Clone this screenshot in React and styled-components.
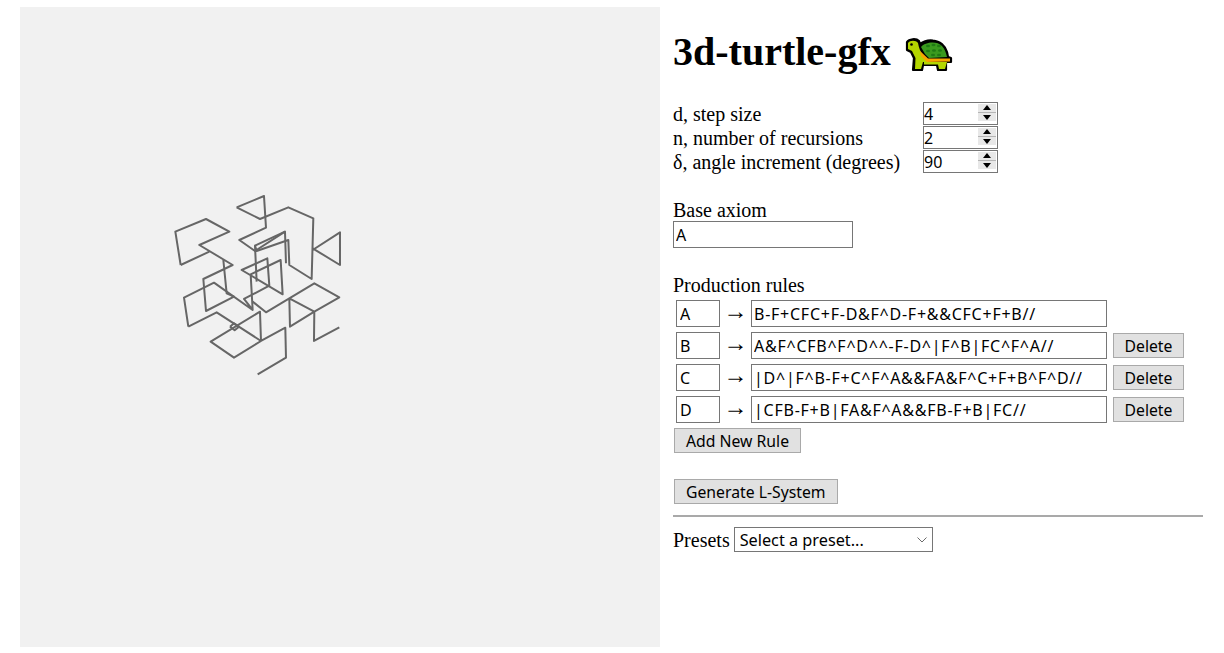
import React from 'react';
import styled, { createGlobalStyle } from 'styled-components';

const GlobalStyle = createGlobalStyle`
    html, body {
        margin: 0;
        padding: 0;
        background: #FFFFFF;
    }
`;

const drawing = [
    '293,568 378,518 376,428 303,468 300,380 152,470 222,518 303,468',
    '85,425 72,338 162,293 278,375 252,342 328,302 322,220 245,255 368,328 362,225 272,268 278,375',
    '85,425 170,382 303,468',
    '210,425 222,415 237,425 224,436 210,425',
    '278,350 318,382 388,340 463,295 538,337 463,380 388,340 390,425 463,380 462,468 538,427',
    '230,67 312,33 318,128 238,165 285,198 375,140 378,235',
    '230,67 300,102 385,67 460,100 455,282 388,240 385,165 290,198 285,182 290,290',
    '285,182 375,140',
    '458,195 540,142 540,240 458,190',
    '62,240 46,140 138,102 208,140 118,180 218,240 130,282 138,378 222,335 200,325 190,225',
    '62,240 148,200',
];

const rules = [
    { key: 'A', value: 'B-F+CFC+F-D&F^D-F+&&CFC+F+B//' },
    { key: 'B', value: 'A&F^CFB^F^D^^-F-D^|F^B|FC^F^A//', removable: true },
    { key: 'C', value: '|D^|F^B-F+C^F^A&&FA&F^C+F+B^F^D//', removable: true },
    { key: 'D', value: '|CFB-F+B|FA&F^A&&FB-F+B|FC//', removable: true },
];

const params = [
    { label: 'd, step size', value: 4 },
    { label: 'n, number of recursions', value: 2 },
    { label: 'δ, angle increment (degrees)', value: 90 },
];

const Turtle = () => (
    <TurtleIcon viewBox="0 0 48 36" width="48" height="36">
        {/* outline */}
        <path d="M2 4 C4 1 11 0 14 3 L15 6 C19 3 24 2 28 2.5 C35 3 40 8 42 14 L43 19 L46 20 L46 24 L41 24 L41 32 L33 32 L32 27 L18 27 L17 32 L8 32 L9 20 L6 14 L2 12 Z" fill="#000000" stroke="#000000" strokeWidth="2.2" strokeLinejoin="round" />
        {/* head, neck and front leg */}
        <path d="M3 5 C5 2 11 2 13 5 C14 10 15 13 18 17 L23 24 L18 24 L16 31 L10 31 L10.5 20 L7 13 L3 11 Z" fill="#B4D600" />
        {/* back leg and belly */}
        <path d="M19 24 L42 24 L40 31 L34 31 L33 26.5 L19 26.5 Z" fill="#B4D600" />
        <path d="M16 9 C20 4 32 2.5 37 8 C40 11 41 15 42 19 L24 20 L20 16 Z" fill="#3A9A1E" />
        <path d="M15 13 L23 20.5 L45 20.5 L45 23.5 L22 24 L16 18 Z" fill="#F7A600" />
        <g fill="#1F7A14">
            <ellipse cx="23" cy="8" rx="2" ry="1.3" />
            <ellipse cx="28.5" cy="7" rx="2" ry="1.3" />
            <ellipse cx="34" cy="8" rx="2" ry="1.3" />
            <ellipse cx="23" cy="13" rx="2" ry="1.3" />
            <ellipse cx="29" cy="12.5" rx="2" ry="1.3" />
            <ellipse cx="35" cy="12.5" rx="2" ry="1.3" />
            <ellipse cx="28" cy="17" rx="2" ry="1.3" />
            <ellipse cx="34" cy="17" rx="2" ry="1.3" />
        </g>
        <circle cx="6.5" cy="6.5" r="1.3" fill="#000000" />
    </TurtleIcon>
);

const NumberField = ({ value }) => (
    <NumberWrap>
        <NumberInput type="text" defaultValue={value} />
        <Spinner>
            <SpinButton viewBox="0 0 18 8" width="18" height="8"><path d="M9 1 L13 6 L5 6 Z" fill="#000000" /></SpinButton>
            <SpinButton viewBox="0 0 18 8" width="18" height="8"><path d="M5 2 L13 2 L9 7 Z" fill="#000000" /></SpinButton>
        </Spinner>
    </NumberWrap>
);

const App = () => {
    return (
        <Page>
            <GlobalStyle />
            <Viewport>
                <svg width="640" height="640" viewBox="0 0 640 640">
                    <g transform="translate(140 178) scale(0.3333)" fill="none" stroke="#666666" strokeWidth="6" strokeLinejoin="round">
                        {drawing.map((points) => (
                            <polyline key={points} points={points} />
                        ))}
                    </g>
                </svg>
            </Viewport>
            <Controls>
                <Title>3d-turtle-gfx <Turtle /></Title>
                <ParamGrid>
                    {params.map((p) => (
                        <React.Fragment key={p.label}>
                            <Label>{p.label}</Label>
                            <NumberField value={p.value} />
                        </React.Fragment>
                    ))}
                </ParamGrid>
                <Section>
                    <Label>Base axiom</Label>
                    <AxiomInput defaultValue="A" />
                </Section>
                <RulesSection>
                    <Label>Production rules</Label>
                    <RuleList>
                        {rules.map((r) => (
                            <RuleRow key={r.key}>
                                <KeyInput defaultValue={r.key} />
                                <Arrow>→</Arrow>
                                <ValueInput defaultValue={r.value} />
                                {r.removable && <DeleteButton>Delete</DeleteButton>}
                            </RuleRow>
                        ))}
                    </RuleList>
                    <AddRow><Button>Add New Rule</Button></AddRow>
                </RulesSection>
                <GenerateRow><Button>Generate L-System</Button></GenerateRow>
                <Divider />
                <PresetRow>
                    <Label>Presets</Label>
                    <SelectWrap>
                        <PresetSelect>
                            <option>Select a preset...</option>
                        </PresetSelect>
                        <Chevron viewBox="0 0 10 6" width="10" height="6">
                            <path d="M0.5 0.5 L5 5 L9.5 0.5" fill="none" stroke="#6B6B6B" strokeWidth="1" />
                        </Chevron>
                    </SelectWrap>
                </PresetRow>
            </Controls>
        </Page>
    );
};

const uiFont = `'Noto Sans', 'Open Sans', sans-serif`;

const Page = styled.div`
    display: flex;
    gap: 13px;
    width: 1224px;
    height: 653px;
    padding: 7px 0 0 20px;
    box-sizing: border-box;
    overflow: hidden;
    font-family: 'Liberation Serif', serif;
    color: #000000;
`;

const Viewport = styled.div`
    flex: none;
    width: 640px;
    height: 640px;
    background: #F1F1F1;

    svg {
        display: block;
        filter: blur(0.45px);
    }
`;

const Controls = styled.div`
    flex: none;
    width: 530px;
`;

const Title = styled.h1`
    display: flex;
    align-items: center;
    gap: 4px;
    margin: 0;
    padding-top: 20px;
    height: 70px;
    box-sizing: border-box;
    font-size: 40px;
    line-height: 42px;
    font-weight: 700;
    white-space: pre;
`;

const TurtleIcon = styled.svg`
    flex: none;
    margin-top: 8px;
`;

const ParamGrid = styled.div`
    display: grid;
    grid-template-columns: 250px 75px;
    row-gap: 1px;
    margin-top: 25px;
`;

const Label = styled.span`
    display: block;
    height: 23px;
    padding-top: 2px;
    box-sizing: border-box;
    font-size: 20px;
    line-height: 21px;
    white-space: nowrap;
`;

const NumberWrap = styled.div`
    position: relative;
    width: 75px;
    height: 23px;
`;

const BaseInput = styled.input`
    display: block;
    box-sizing: border-box;
    border: 1px solid #767676;
    border-radius: 0;
    margin: 0;
    outline: none;
    background: #FFFFFF;
    color: #000000;
    font-family: ${uiFont};
    font-size: 16px;
`;

const NumberInput = styled(BaseInput)`
    width: 75px;
    height: 23px;
    padding: 0;
`;

const Spinner = styled.div`
    position: absolute;
    top: 2px;
    right: 2px;
    display: flex;
    flex-direction: column;
    gap: 1px;
    width: 18px;
    background: #B5B5B5;
`;

const SpinButton = styled.svg`
    display: block;
    background: #E8E8E8;
`;

const Section = styled.div`
    display: flex;
    flex-direction: column;
    margin-top: 25px;
`;

const AxiomInput = styled(BaseInput)`
    width: 180px;
    height: 27px;
    padding: 0 2px;
`;

const RulesSection = styled.div`
    margin-top: 25px;
`;

const RuleList = styled.div`
    display: flex;
    flex-direction: column;
    gap: 5px;
    margin-top: 4px;
    padding-left: 3px;
`;

const RuleRow = styled.div`
    display: flex;
    align-items: center;
    height: 27px;
`;

const KeyInput = styled(BaseInput)`
    flex: none;
    width: 44px;
    height: 27px;
    padding: 0 3px;
`;

const Arrow = styled.span`
    flex: none;
    width: 31px;
    padding-bottom: 5px;
    text-align: center;
    font-size: 24px;
    line-height: 22px;
`;

const ValueInput = styled(BaseInput)`
    flex: none;
    width: 356px;
    height: 27px;
    padding: 0 2px;
    letter-spacing: 0.75px;
`;

const Button = styled.button`
    flex: none;
    height: 25px;
    margin: 0 0 0 6px;
    padding: 0 11px;
    box-sizing: border-box;
    border: 1px solid #A9A9A9;
    border-radius: 0;
    background: #E1E1E1;
    color: #000000;
    font-family: ${uiFont};
    font-size: 15.75px;
    line-height: 22px;
    white-space: nowrap;
`;

const DeleteButton = styled(Button)`
    width: 71px;
    padding: 0;
`;

const AddRow = styled.div`
    margin: 5px 0 0 -5px;
`;

const GenerateRow = styled.div`
    margin: 26px 0 0 -5px;
`;

const Divider = styled.div`
    height: 2px;
    margin-top: 11px;
    background: #A9A9A9;
`;

const PresetRow = styled.div`
    display: flex;
    align-items: center;
    gap: 4px;
    margin-top: 10px;
`;

const SelectWrap = styled.div`
    position: relative;
    width: 199px;
    height: 25px;
`;

const PresetSelect = styled.select`
    display: block;
    appearance: none;
    width: 199px;
    height: 25px;
    padding: 0 20px 0 5px;
    box-sizing: border-box;
    border: 1px solid #767676;
    border-radius: 0;
    background: #FFFFFF;
    color: #000000;
    font-family: ${uiFont};
    font-size: 16.25px;
`;

const Chevron = styled.svg`
    position: absolute;
    top: 10px;
    right: 6px;
    pointer-events: none;
`;

export default App;
